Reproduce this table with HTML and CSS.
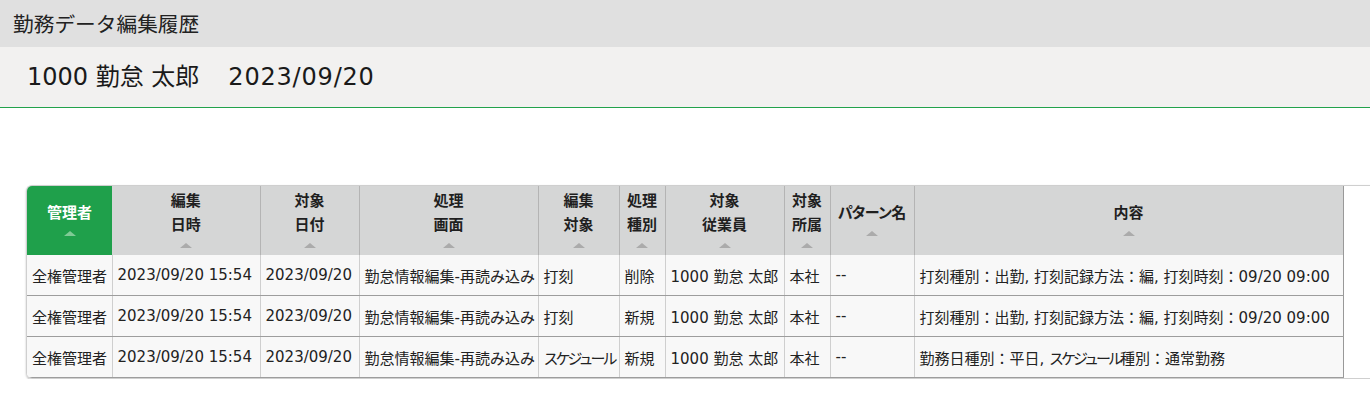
FILE: index.html
```html
<!DOCTYPE html>
<html lang="ja">
<head>
<meta charset="utf-8">
<title>勤務データ編集履歴</title>
<link rel="stylesheet" href="styles.css">
</head>
<body>
<header class="title-bar">勤務データ編集履歴</header>
<div class="sub-bar"><span class="name">1000 勤怠 太郎</span><span class="date">2023/09/20</span></div>
<main class="content">
  <div class="table-wrap">
    <table class="history">
      <colgroup>
        <col style="width:85px"><col style="width:148px"><col style="width:99px"><col style="width:179px"><col style="width:81px"><col style="width:46px"><col style="width:119px"><col style="width:46px"><col style="width:84px"><col style="width:429px">
      </colgroup>
      <thead>
        <tr>
          <th class="active"><div class="th-in"><span>管理者</span><i class="sort"></i></div></th>
          <th><div class="th-in"><span>編集<br>日時</span><i class="sort"></i></div></th>
          <th><div class="th-in"><span>対象<br>日付</span><i class="sort"></i></div></th>
          <th><div class="th-in"><span>処理<br>画面</span><i class="sort"></i></div></th>
          <th><div class="th-in"><span>編集<br>対象</span><i class="sort"></i></div></th>
          <th><div class="th-in"><span>処理<br>種別</span><i class="sort"></i></div></th>
          <th><div class="th-in"><span>対象<br>従業員</span><i class="sort"></i></div></th>
          <th><div class="th-in"><span>対象<br>所属</span><i class="sort"></i></div></th>
          <th><div class="th-in"><span><span class="kana-h">パターン</span>名</span><i class="sort"></i></div></th>
          <th><div class="th-in"><span>内容</span><i class="sort"></i></div></th>
        </tr>
      </thead>
      <tbody>
        <tr>
          <td>全権管理者</td><td>2023/09/20 15:54</td><td>2023/09/20</td><td>勤怠情報編集-再読み込み</td><td>打刻</td><td>削除</td><td>1000 勤怠 太郎</td><td>本社</td><td>--</td><td>打刻種別：出勤, 打刻記録方法：編, 打刻時刻：09/20 09:00</td>
        </tr>
        <tr>
          <td>全権管理者</td><td>2023/09/20 15:54</td><td>2023/09/20</td><td>勤怠情報編集-再読み込み</td><td>打刻</td><td>新規</td><td>1000 勤怠 太郎</td><td>本社</td><td>--</td><td>打刻種別：出勤, 打刻記録方法：編, 打刻時刻：09/20 09:00</td>
        </tr>
        <tr>
          <td>全権管理者</td><td>2023/09/20 15:54</td><td>2023/09/20</td><td>勤怠情報編集-再読み込み</td><td><span class="kana">スケジュール</span></td><td>新規</td><td>1000 勤怠 太郎</td><td>本社</td><td>--</td><td>勤務日種別：平日, <span class="kana">スケジュール</span>種別：通常勤務</td>
        </tr>
      </tbody>
    </table>
  </div>
</main>
</body>
</html>
```

FILE: styles.css
```css
html, body {
  margin: 0;
  padding: 0;
  background: #fff;
  overflow: hidden;
}
body {
  font-family: "DejaVu Sans", "Noto Sans CJK JP", sans-serif;
  color: #222;
}
.title-bar {
  height: 47px;
  box-sizing: border-box;
  background: #e0e0e0;
  font-family: "Noto Sans CJK JP", sans-serif;
  font-size: 20.7px;
  line-height: 47px;
  padding-left: 13px;
  color: #222;
}
.sub-bar {
  height: 61px;
  box-sizing: border-box;
  background: #f2f1f0;
  border-bottom: 1px solid #22a24b;
  font-size: 24px;
  line-height: 60px;
  padding-left: 27px;
  display: flex;
  gap: 29px;
  color: #1a1a1a;
}
.sub-bar .date {
  letter-spacing: 0.8px;
}
.content {
  padding-top: 77px;
  padding-left: 26px;
}
.table-wrap {
  width: 1360px;
  border: 1px solid #cfcfcf;
  border-right: none;
  border-radius: 6px 0 0 6px;
  box-shadow: 0 1px 2px rgba(0,0,0,0.25);
  overflow: hidden;
}
.history {
  table-layout: fixed;
  width: 1316px;
  border-collapse: collapse;
  font-size: 15px;
}
.kana {
  letter-spacing: -3px;
}
.kana-h {
  letter-spacing: -1.5px;
}
.history th {
  background: #d5d6d6;
  height: 69px;
  padding: 0;
  border-right: 1px solid #b4b4b4;
  font-weight: bold;
  font-size: 15px;
  vertical-align: middle;
  text-align: center;
  color: #1f1f1f;
  white-space: nowrap;
}
.history th:last-child {
  border-right: 1px solid #999;
}
.history th.active {
  background: #1fa04b;
  color: #fff;
  border-right: none;
}
.th-in {
  line-height: 24px;
  display: flex;
  flex-direction: column;
  align-items: center;
}
.sort {
  display: block;
  width: 0;
  height: 0;
  margin: 6px 0 5px;
  border-left: 6px solid transparent;
  border-right: 6px solid transparent;
  border-bottom: 5px solid #ababab;
}
.active .sort {
  border-bottom-color: #7fcb95;
}
.history td {
  background: #f8f8f8;
  height: 40px;
  padding: 0 5px;
  white-space: nowrap;
  overflow: hidden;
  border-right: 1px solid #cfcfcf;
  border-bottom: 1px solid #9d9d9d;
  color: #222;
}
.history td:last-child {
  border-right: 1px solid #999;
}
```
